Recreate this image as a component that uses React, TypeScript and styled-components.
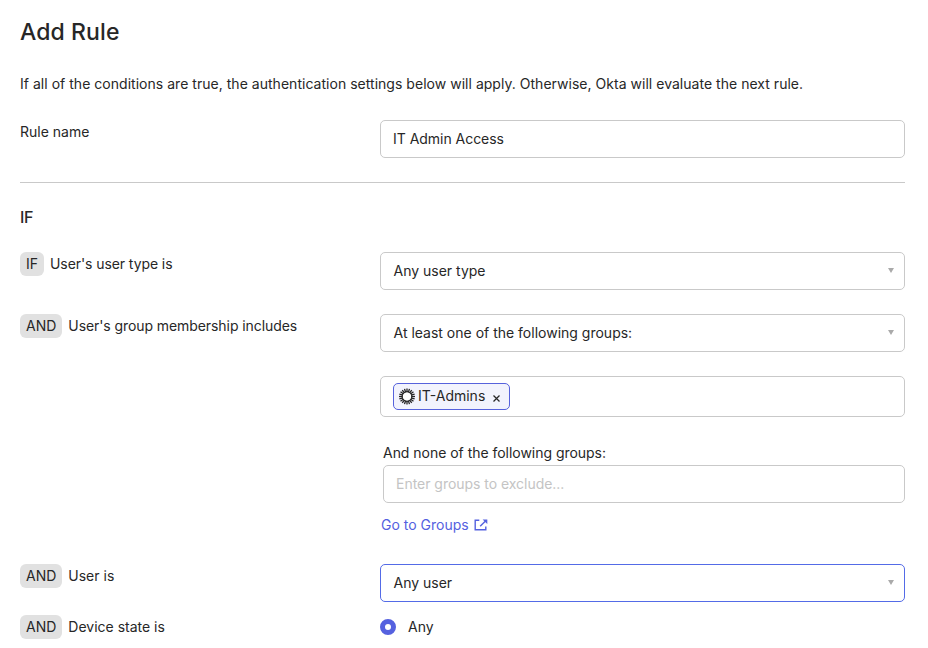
import React from "react";
import styled, { createGlobalStyle } from "styled-components";

const GlobalStyle = createGlobalStyle`
  *, *::before, *::after { box-sizing: border-box; }
  body {
    margin: 0;
    background: #fff;
    color: #272727;
    font-family: Inter, "Liberation Sans", sans-serif;
    font-size: 14px;
    line-height: 24px;
    overflow: hidden;
  }
`;

const Page = styled.main`
  width: 925px;
  height: 648px;
  padding: 16px 20px 0;
  overflow: hidden;
`;

const Title = styled.h1`
  margin: 0;
  font-size: 23px;
  font-weight: 500;
  letter-spacing: 0.1px;
  line-height: 32px;
`;

const Intro = styled.p`
  margin: 24px 0;
  letter-spacing: 0.027px;
  white-space: nowrap;
`;

const Row = styled.div<{ $gap?: number }>`
  display: grid;
  grid-template-columns: 360px 525px;
  align-items: start;
  margin-bottom: ${({ $gap = 24 }) => $gap}px;
`;

const Divider = styled.hr`
  height: 1px;
  margin: 0 0 22px;
  border: 0;
  background: #c9c9c9;
`;

const SectionTitle = styled.h2`
  margin: 0 0 23px;
  font-size: 16px;
  font-weight: 500;
  letter-spacing: -0.3px;
  line-height: 24px;
`;

const Condition = styled.div`
  display: flex;
  gap: 6px;
`;

const Badge = styled.span`
  height: 24px;
  padding: 0 6px;
  border-radius: 6px;
  background: #e1e1e1;
`;

const ConditionText = styled.span<{ $tight?: boolean }>`
  letter-spacing: ${({ $tight }) => ($tight ? "-0.08px" : "0")};
`;

const Field = styled.div<{ $active?: boolean }>`
  display: flex;
  align-items: center;
  justify-content: space-between;
  height: 38px;
  padding: 0 10px 0 12.5px;
  border: 1px solid ${({ $active }) => ($active ? "#546be7" : "#c9c9c9")};
  border-radius: 5px;
`;

const Input = styled.input`
  width: 100%;
  height: 38px;
  padding: 0 12px 2px;
  border: 1px solid #c9c9c9;
  border-radius: 5px;
  outline: 0;
  background: #fff;
  color: inherit;
  font: inherit;
  letter-spacing: -0.03px;
  &::placeholder { color: #c4c4c4; opacity: 1; }
`;

const Arrow = styled.svg`
  width: 6px;
  height: 5px;
  margin-top: -2px;
  fill: #aaa;
`;

const Groups = styled.div`
  display: flex;
  flex-direction: column;
`;

const TagField = styled.div`
  display: flex;
  height: 41px;
  margin: 24px 0;
  padding: 6px 12px;
  border: 1px solid #c9c9c9;
  border-radius: 5px;
`;

const Tag = styled.span`
  display: flex;
  align-items: center;
  height: 27px;
  width: 117px;
  padding: 0 9px 1px 5px;
  border: 1px solid #5662dc;
  border-radius: 5px;
  background: #f2f3fd;
`;

const TagName = styled.span`
  margin-left: 2px;
`;

const RemoveIcon = styled.svg`
  width: 7px;
  height: 7px;
  margin: 4px 0 0 auto;
  stroke: #272727;
  stroke-width: 1.25;
`;

const Exclude = styled.label`
  display: block;
  margin-left: 3px;
  letter-spacing: -0.03px;
`;

const GroupsLink = styled.a`
  display: flex;
  align-items: center;
  gap: 5px;
  align-self: flex-start;
  margin: 10px 0 0 1px;
  color: #5461df;
  text-decoration: none;
`;

const Choice = styled.label`
  display: flex;
  align-items: center;
  gap: 12px;
  height: 24px;
`;

const Radio = styled.input`
  appearance: none;
  width: 16px;
  height: 16px;
  margin: 0;
  border: 5px solid #5561df;
  border-radius: 50%;
  background: #fff;
`;

function Select({ value, active }: { value: string; active?: boolean }) {
  return (
    <Field $active={active} role="combobox">
      <span>{value}</span>
      <Arrow viewBox="0 0 6 5"><path d="M0 0h6L3 5z" /></Arrow>
    </Field>
  );
}

function ConditionLabel({ operator, text, tight }: { operator: string; text: string; tight?: boolean }) {
  return (
    <Condition>
      <Badge>{operator}</Badge>
      <ConditionText $tight={tight}>{text}</ConditionText>
    </Condition>
  );
}

function GroupIcon() {
  return (
    <svg width="17" height="17" viewBox="0 0 17 17">
      <circle cx="8" cy="8.5" r="4.9" fill="#fff" stroke="#242424" strokeWidth="1" />
      {Array.from({ length: 20 }, (_, i) => (
        <path
          key={i}
          d="M8 .5v3.8"
          stroke="#242424"
          strokeWidth="1.3"
          transform={`rotate(${(i * 360) / 20} 8 8.5)`}
        />
      ))}
    </svg>
  );
}

export default function App() {
  return (
    <>
      <GlobalStyle />
      <Page>
        <Title>Add Rule</Title>
        <Intro>
          If all of the conditions are true, the authentication settings below will apply. Otherwise, Okta will evaluate the next rule.
        </Intro>
        <Row>
          <label htmlFor="rule-name">Rule name</label>
          <Input id="rule-name" defaultValue="IT Admin Access" />
        </Row>
        <Divider />
        <SectionTitle>IF</SectionTitle>
        <Row>
          <ConditionLabel operator="IF" text="User's user type is" tight />
          <Select value="Any user type" />
        </Row>
        <Row $gap={27}>
          <ConditionLabel operator="AND" text="User's group membership includes" tight />
          <Groups>
            <Select value="At least one of the following groups:" />
            <TagField>
              <Tag>
                <GroupIcon />
                <TagName>IT-Admins</TagName>
                <RemoveIcon viewBox="0 0 7 7"><path d="M.5.5l6 6m0-6l-6 6" /></RemoveIcon>
              </Tag>
            </TagField>
            <Exclude>
              And none of the following groups:
              <Input placeholder="Enter groups to exclude..." />
            </Exclude>
            <GroupsLink href="#">
              Go to Groups
              <svg width="14" height="12" viewBox="0 0 14 12" fill="none" stroke="currentColor" strokeWidth="1.4">
                <path d="M5.3 1.2H1.2v9.6h10.6V7.5" />
                <path d="M6.2 7.2L11.5 2" />
                <path d="M8.6.4h4.7V5z" fill="currentColor" stroke="none" />
              </svg>
            </GroupsLink>
          </Groups>
        </Row>
        <Row $gap={13}>
          <ConditionLabel operator="AND" text="User is" />
          <Select value="Any user" active />
        </Row>
        <Row>
          <ConditionLabel operator="AND" text="Device state is" />
          <Choice>
            <Radio type="radio" name="device" defaultChecked />
            Any
          </Choice>
        </Row>
      </Page>
    </>
  );
}
